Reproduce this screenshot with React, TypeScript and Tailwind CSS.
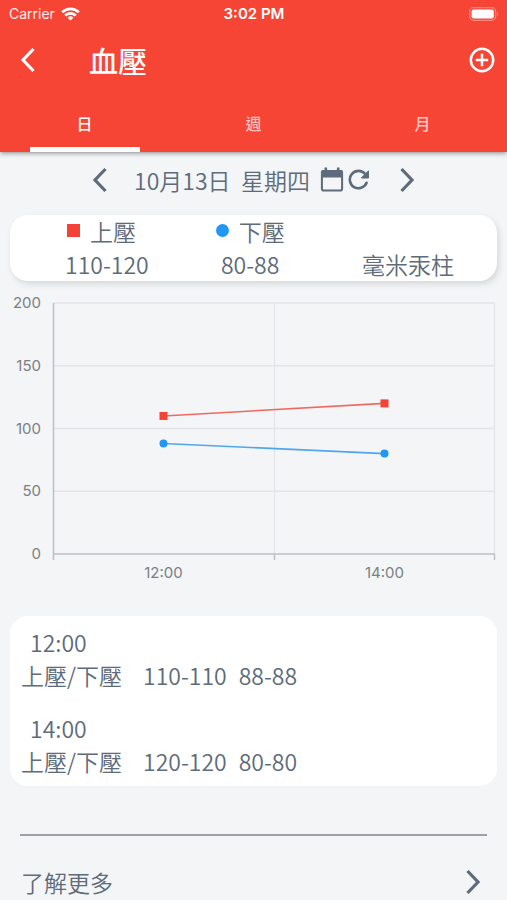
import { useState } from "react";

interface Reading {
  time: string;
  high: number;
  low: number;
}

const readings: Reading[] = [
  { time: "12:00", high: 110, low: 88 },
  { time: "14:00", high: 120, low: 80 },
];

const tabs = ["日", "週", "月"];

// chart geometry
const LEFT = 53;
const RIGHT = 495;
const TOP = 22;
const BOTTOM = 273;
const MAX = 200;

const yOf = (value: number) => BOTTOM - (value / MAX) * (BOTTOM - TOP);
const xOf = (i: number) => LEFT + ((i + 0.5) * (RIGHT - LEFT)) / readings.length;

function Chevron({ dir }: { dir: "left" | "right" }) {
  return (
    <svg width="16" height="26" viewBox="0 0 16 26" fill="none" stroke="currentColor" strokeWidth="3.2" aria-hidden="true">
      <path d={dir === "left" ? "M13.5 2 3 13l10.5 11" : "M2.5 2 13 13 2.5 24"} />
    </svg>
  );
}

function StatusBar() {
  return (
    <div className="grid h-7 grid-cols-3 items-center pr-2 pl-[9px] font-['Inter',sans-serif] text-sm font-normal">
      <div className="flex items-center gap-1.5 text-white/90">
        <span>Carrier</span>
        <svg width="19" height="14" viewBox="0 0 19 14" fill="none" stroke="#fff" strokeWidth="2.8" aria-hidden="true">
          <path d="M1.2 5.2a11.8 11.8 0 0 1 16.6 0" />
          <path d="M4.2 8.5a7.5 7.5 0 0 1 10.6 0" />
          <path d="M9.5 13.6 6.6 10.7a4.1 4.1 0 0 1 5.8 0z" fill="#fff" stroke="none" />
        </svg>
      </div>
      <div className="text-center text-[15px] font-semibold">3:02 PM</div>
      <svg className="justify-self-end" width="30" height="14" viewBox="0 0 30 14" aria-hidden="true">
        <rect x="0.7" y="0.7" width="26" height="12.6" rx="4" fill="none" stroke="#fff" strokeOpacity="0.35" strokeWidth="1.3" />
        <rect x="2.6" y="2.6" width="22.2" height="8.8" rx="2" fill="#fff" />
        <path d="M28 4.7c1.6.8 1.6 3.8 0 4.6z" fill="#fff" fillOpacity="0.4" />
      </svg>
    </div>
  );
}

function PressureChart() {
  const line = (key: "high" | "low") => readings.map((r, i) => `${xOf(i)},${yOf(r[key])}`).join(" ");

  return (
    <svg className="block w-full" viewBox="0 0 507 303" role="img" aria-label="血壓">
      <g stroke="#e3e5e8" strokeWidth="1.4">
        {[50, 100, 150, 200].map((v) => (
          <line key={v} x1={LEFT} x2={RIGHT} y1={yOf(v)} y2={yOf(v)} />
        ))}
        <line x1="274.5" x2="274.5" y1={TOP} y2={BOTTOM} />
        <line x1="494.5" x2="494.5" y1={TOP} y2={BOTTOM} />
      </g>
      <g stroke="#bcc0c4" strokeWidth="1.5">
        <line x1="53.5" x2="53.5" y1={TOP} y2="279" />
        <line x1={LEFT} x2={RIGHT} y1={BOTTOM} y2={BOTTOM} />
        <line x1="274.5" x2="274.5" y1={BOTTOM} y2="279" />
        <line x1="494.5" x2="494.5" y1={BOTTOM} y2="279" />
      </g>
      <g className="font-['Inter',sans-serif] text-[15px] font-normal" fill="#7b7f84">
        {[0, 50, 100, 150, 200].map((v) => (
          <text key={v} x="41" y={yOf(v) + 5} textAnchor="end">{v}</text>
        ))}
        {readings.map((r, i) => (
          <text key={r.time} x={xOf(i)} y="297" textAnchor="middle">{r.time}</text>
        ))}
      </g>
      <polyline points={line("high")} fill="none" stroke="#f0695f" strokeWidth="1.6" />
      <polyline points={line("low")} fill="none" stroke="#4fa6ee" strokeWidth="1.6" />
      {readings.map((r, i) => (
        <g key={r.time}>
          <rect x={xOf(i) - 4} y={yOf(r.high) - 4} width="8" height="8" fill="#f44336" />
          <circle cx={xOf(i)} cy={yOf(r.low)} r="4" fill="#2196f3" />
        </g>
      ))}
    </svg>
  );
}

export default function App() {
  const [tab, setTab] = useState(0);

  return (
    <div className="min-h-screen bg-[#f3f5f7] font-['Noto_Sans_CJK_TC',sans-serif] text-[23px] leading-[33px] font-[350] text-[#5d6b7a]">
      <header className="bg-[#f64435] text-white shadow-[0_1px_5px_rgba(0,0,0,0.45)]">
        <StatusBar />
        <div className="flex h-16 items-center pr-3 pl-5">
          <button aria-label="返回" className="cursor-pointer"><Chevron dir="left" /></button>
          <h1 className="ml-[53px] flex-1 text-[29px] font-medium">血壓</h1>
          <button aria-label="新增" className="cursor-pointer">
            <svg width="26" height="26" viewBox="0 0 26 26" fill="none" stroke="currentColor" strokeWidth="2.5" aria-hidden="true">
              <circle cx="13" cy="13" r="11.2" />
              <path d="M13 6.8v12.4M6.8 13h12.4" />
            </svg>
          </button>
        </div>
        <div role="tablist" className="grid h-[60px] grid-cols-3 text-base font-medium">
          {tabs.map((name, i) => (
            <button
              key={name}
              role="tab"
              aria-selected={tab === i}
              onClick={() => setTab(i)}
              className={`flex cursor-pointer flex-col items-center justify-end ${tab === i ? "text-white" : "text-white/70"}`}
            >
              <span className="mb-3">{name}</span>
              <span className={`h-[5px] w-[110px] ${tab === i ? "bg-white" : ""}`} />
            </button>
          ))}
        </div>
      </header>

      <div className="flex h-14 items-center justify-center">
        <button aria-label="前一日" className="mr-[26px] cursor-pointer"><Chevron dir="left" /></button>
        <span className="mr-2.5 whitespace-pre">10月13日  星期四</span>
        <button aria-label="選擇日期" className="cursor-pointer">
          <svg width="24" height="26" viewBox="0 0 24 26" aria-hidden="true">
            <rect x="1.9" y="4" width="20.2" height="19.6" rx="1.8" fill="none" stroke="currentColor" strokeWidth="2" />
            <path d="M1 10.5V5a2 2 0 0 1 2-2h18a2 2 0 0 1 2 2v5.5z" fill="currentColor" />
            <path d="M4.5 0.5h2.6V4H4.500zM16.900 0.500h2.600V4h-2.600z" fill="currentColor" />
          </svg>
        </button>
        <button aria-label="重新整理" className="ml-1 cursor-pointer">
          <svg width="22" height="24" viewBox="0 0 22 24" aria-hidden="true">
            <path d="M17.2 6A8.700 8.700 0 1 0 18.600 14.800" fill="none" stroke="currentColor" strokeWidth="2.600" strokeLinecap="round" />
            <path d="M20.500 2.800v7.200h-7.200z" fill="currentColor" stroke="currentColor" strokeWidth="1" strokeLinejoin="round" />
          </svg>
        </button>
        <button aria-label="後一日" className="ml-[29px] cursor-pointer"><Chevron dir="right" /></button>
      </div>

      <section className="mx-2.5 mt-[7px] flex items-end gap-[67px] rounded-[18px] bg-white pr-[43px] pl-[55px] shadow-[2px_3px_6px_rgba(0,0,0,0.12)]">
        <div>
          <div className="flex items-center gap-2.5 pl-0.5">
            <span className="mb-0.5 size-[13px] bg-[#f44336]" />
            上壓
          </div>
          <div>110-120</div>
        </div>
        <div>
          <div className="flex items-center gap-2.5">
            <span className="mb-0.5 size-[13px] rounded-full bg-[#2196f3]" />
            下壓
          </div>
          <div className="text-center">80-88</div>
        </div>
        <div className="ml-auto">毫米汞柱</div>
      </section>

      <PressureChart />

      <section className="mx-2.5 mt-8 flex flex-col gap-5 rounded-[18px] bg-white px-[11px] pt-2.5 pb-2">
        {readings.map((r) => (
          <div key={r.time}>
            <div className="pl-[9px]">{r.time}</div>
            <div className="flex">
              <span className="mr-[21px]">上壓/下壓</span>
              <span className="mr-3">{r.high}-{r.high}</span>
              <span>{r.low}-{r.low}</span>
            </div>
          </div>
        ))}
      </section>

      <hr className="mx-5 mt-12 border-t-2 border-[#9ba1a5]" />

      <a href="#more" className="mt-7 flex h-9 items-center justify-between pr-[26px] pl-[21px]">
        了解更多
        <Chevron dir="right" />
      </a>
    </div>
  );
}
